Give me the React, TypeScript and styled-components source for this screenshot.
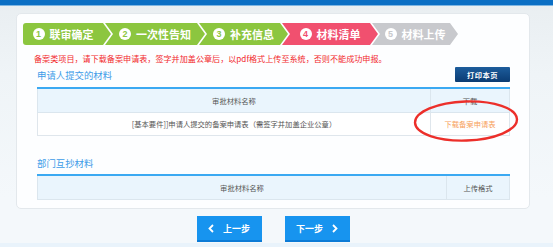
import React from 'react'
import styled, { createGlobalStyle } from 'styled-components'

const GlobalStyle = createGlobalStyle`
	html, body {
		margin: 0;
		padding: 0;
		background: #eef4f9;
	}
	body {
		font-family: 'Noto Sans CJK SC', 'Noto Sans', sans-serif;
	}
`

const Page = styled.div`
	width: 553px;
	height: 247px;
	overflow: hidden;
	background: linear-gradient(180deg, #e9eef1 0%, #eff4f7 30%, #f4f8fb 80%, #f4f8fb 100%);
	display: flex;
	flex-direction: column;
`

const TopBar = styled.div`
	height: 5px;
	background: #0b6fc4;
	border-bottom: 1px solid #7fb6e2;
`

const Card = styled.div`
	margin: 7px 0 0 16px;
	width: 514px;
	box-sizing: border-box;
	background: #fdfeff;
	border: 1px solid #e3e8ec;
	border-radius: 5px;
	padding: 9px 19px 8px 20px;
	display: flex;
	flex-direction: column;
`

const Steps = styled.div`
	display: flex;
	margin-left: -14px;
	height: 22px;
`

const Step = styled.div<{ $w: number; $color: string; $first?: boolean }>`
	width: ${({ $w }) => $w}px;
	flex: none;
	height: 22px;
	margin-left: ${({ $first }) => ($first ? 0 : -6)}px;
	background: ${({ $color }) => $color};
	border-radius: ${({ $first }) => ($first ? '3px 0 0 3px' : '0')};
	clip-path: ${({ $first }) =>
		$first
			? 'polygon(0 0, calc(100% - 8px) 0, 100% 50%, calc(100% - 8px) 100%, 0 100%)'
			: 'polygon(0 0, calc(100% - 8px) 0, 100% 50%, calc(100% - 8px) 100%, 0 100%, 8px 50%)'};
	box-sizing: border-box;
	padding: 0 8px 0 ${({ $first }) => ($first ? 0 : 8)}px;
	display: flex;
	align-items: center;
	justify-content: center;
	gap: 5px;
	color: #fff;
	font-size: 11px;
	font-weight: 700;
	white-space: nowrap;
`

const Num = styled.span<{ $color: string }>`
	width: 12px;
	height: 12px;
	border-radius: 50%;
	background: #fff;
	color: ${({ $color }) => $color};
	font-size: 9px;
	font-weight: 700;
	line-height: 12px;
	text-align: center;
	font-family: 'Liberation Sans', Arial, sans-serif;
`

const Notice = styled.div`
	margin-top: 9px;
	margin-left: -3px;
	color: #f2282c;
	font-size: 8.1px;
	line-height: 10px;
	white-space: nowrap;
`

const SectionRow = styled.div`
	display: flex;
	align-items: flex-end;
	justify-content: space-between;
	margin-top: 3px;
	height: 15px;
`

const SectionTitle = styled.div<{ $top?: number }>`
	color: #3d9ce8;
	font-size: 9.4px;
	line-height: 12px;
	margin-top: ${({ $top }) => $top ?? 0}px;
	padding-bottom: 1px;
`

const PrintButton = styled.button`
	width: 55px;
	height: 15px;
	border: none;
	border-radius: 1px;
	padding: 0;
	background: linear-gradient(180deg, #1d5d9c 0%, #0a3b73 100%);
	color: #fff;
	font-family: inherit;
	font-size: 7.3px;
	font-weight: 700;
	letter-spacing: 0.5px;
`

const TableWrap = styled.div<{ $top: number }>`
	position: relative;
	margin-top: ${({ $top }) => $top}px;
`

const Table = styled.table`
	width: 100%;
	border-collapse: collapse;
	border-top: 2px solid #3ba9f2;
	font-size: 7.3px;
	color: #555;
`

const Th = styled.th<{ $w?: number }>`
	height: 23px;
	padding: 0;
	background: #eaf5fd;
	border: 1px solid #dbe6ee;
	border-top: none;
	font-weight: 400;
	text-align: center;
	width: ${({ $w }) => ($w ? `${$w}px` : 'auto')};
`

const Td = styled.td`
	height: 22px;
	padding: 0;
	border: 1px solid #dfe6ec;
	text-align: center;
	background: #fff;
`

const DownloadLink = styled.a`
	color: #f7a15c;
	text-decoration: none;
`

const Circle = styled.svg`
	position: absolute;
	left: 376px;
	top: 12px;
	width: 106px;
	height: 44px;
	overflow: visible;
`

const ButtonRow = styled.div`
	display: flex;
	justify-content: center;
	gap: 23px;
	width: 514px;
	margin: 7px 0 0 16px;
`

const NavButton = styled.button`
	width: 65px;
	height: 26px;
	border: none;
	border-bottom: 2px solid #0c7bd6;
	padding: 0;
	background: #1794ef;
	color: #fff;
	font-family: inherit;
	font-size: 9px;
	font-weight: 700;
	display: flex;
	align-items: center;
	justify-content: center;
	gap: 9px;
`

const BottomStrip = styled.div`
	flex: 1;
	margin-top: 1px;
	background: #e9f3fb;
`

const Chevron = ({ dir }: { dir: 'left' | 'right' }) => (
	<svg width="6" height="9" viewBox="0 0 6 9">
		<polyline
			points={dir === 'left' ? '5,1 1.5,4.5 5,8' : '1,1 4.5,4.5 1,8'}
			fill="none"
			stroke="#fff"
			strokeWidth="1.8"
		/>
	</svg>
)

const steps = [
	{ n: 1, label: '联审确定', w: 88, color: '#8cc63f' },
	{ n: 2, label: '一次性告知', w: 100, color: '#8cc63f' },
	{ n: 3, label: '补充信息', w: 89, color: '#8cc63f' },
	{ n: 4, label: '材料清单', w: 96, color: '#f1506f' },
	{ n: 5, label: '材料上传', w: 86, color: '#c8c9cd' },
]

const App: React.FC = () => {
	return (
		<>
			<GlobalStyle />
			<Page>
				<TopBar />
				<Card>
					<Steps>
						{steps.map((s, i) => (
							<Step key={s.n} $w={s.w} $color={s.color} $first={i === 0}>
								<Num $color={s.color}>{s.n}</Num>
								{s.label}
							</Step>
						))}
					</Steps>
					<Notice>
						备案类项目，请下载备案申请表，签字并加盖公章后，以pdf格式上传至系统，否则不能成功申报。
					</Notice>
					<SectionRow>
						<SectionTitle>申请人提交的材料</SectionTitle>
						<PrintButton>打印本页</PrintButton>
					</SectionRow>
					<TableWrap $top={5}>
						<Table>
							<thead>
								<tr>
									<Th>审批材料名称</Th>
									<Th $w={78}>下载</Th>
								</tr>
							</thead>
							<tbody>
								<tr>
									<Td>[基本要件]]申请人提交的备案申请表（需签字并加盖企业公章）</Td>
									<Td>
										<DownloadLink>下载备案申请表</DownloadLink>
									</Td>
								</tr>
							</tbody>
						</Table>
						<Circle viewBox="0 0 106 44">
							<ellipse
								cx="53"
								cy="22"
								rx="51"
								ry="19.5"
								fill="none"
								stroke="#ec2f2a"
								strokeWidth="2.4"
								transform="rotate(-2 53 22)"
							/>
						</Circle>
					</TableWrap>
					<SectionTitle $top={21}>部门互抄材料</SectionTitle>
					<TableWrap $top={4}>
						<Table>
							<thead>
								<tr>
									<Th>审批材料名称</Th>
									<Th $w={62}>上传格式</Th>
								</tr>
							</thead>
						</Table>
					</TableWrap>
				</Card>
				<ButtonRow>
					<NavButton>
						<Chevron dir="left" />
						上一步
					</NavButton>
					<NavButton>
						下一步
						<Chevron dir="right" />
					</NavButton>
				</ButtonRow>
				<BottomStrip />
			</Page>
		</>
	)
}

export default App
